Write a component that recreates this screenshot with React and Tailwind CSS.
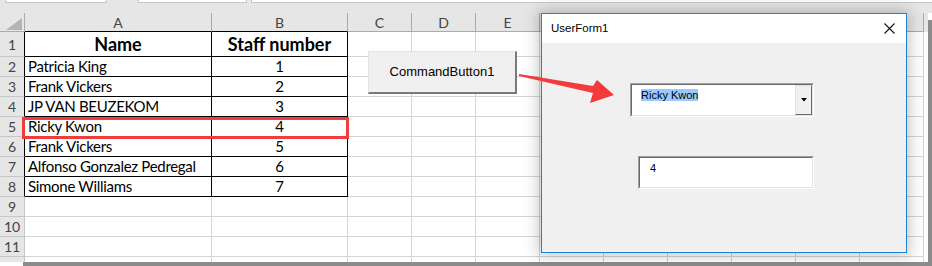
import React from "react";

const COLS = [187, 136, 64, 64, 64, 64, 64, 64, 64, 64, 64];
const LETTERS = ["A", "B", "C", "D", "E", "", "", "", "", "", ""];
const NAMES = [
  "Patricia King",
  "Frank Vickers",
  "JP VAN BEUZEKOM",
  "Ricky Kwon",
  "Frank Vickers",
  "Alfonso Gonzalez Pedregal",
  "Simone Williams",
];

function HeaderRow() {
  return (
    <div className="flex h-[19px] shrink-0 bg-[#e6e6e6] text-[14px] text-[#444]">
      <div className="relative w-[25px] shrink-0 border-r border-b border-[#ababab]">
        <svg className="absolute left-[6px] top-[5px]" width="16" height="12" viewBox="0 0 16 12">
          <polygon points="16,0 16,12 0,12" fill="#b4b4b4" />
        </svg>
      </div>
      {COLS.map((w, i) => (
        <div
          key={i}
          style={{ width: w }}
          className={
            i < 2
              ? "flex shrink-0 items-center justify-center border-r border-b border-r-[#ababab] border-b-black"
              : "flex shrink-0 items-center justify-center border-r border-b border-[#ababab]"
          }
        >
          {LETTERS[i]}
        </div>
      ))}
    </div>
  );
}

function DataRow({ n, h, name, num, header, inTable }) {
  return (
    <div className="flex shrink-0" style={{ height: h }}>
      <div
        className={
          inTable
            ? "flex w-[25px] shrink-0 items-center justify-center border-r border-b border-r-black border-b-[#c6c6c6] bg-[#e6e6e6] text-[14px] text-[#444]"
            : "flex w-[25px] shrink-0 items-center justify-center border-r border-b border-[#c6c6c6] bg-[#e6e6e6] text-[14px] text-[#444]"
        }
      >
        {n}
      </div>
      {COLS.map((w, i) => {
        let cls = "flex shrink-0 items-end pb-[1px] border-r border-b border-[#d4d4d4]";
        if (inTable && i < 2) cls = "flex shrink-0 items-end pb-[1px] border-r border-b border-black";
        let content = null;
        if (i === 0 && name) {
          content = header ? (
            <span className="w-full text-center text-[18px] font-bold leading-[22px]">{name}</span>
          ) : (
            <span className="pl-[3px] leading-[18px] tracking-[-0.3px]">{name}</span>
          );
        }
        if (i === 1 && num) {
          content = header ? (
            <span className="w-full text-center text-[18px] font-bold leading-[22px]">{num}</span>
          ) : (
            <span className="w-full text-center leading-[18px]">{num}</span>
          );
        }
        return (
          <div key={i} style={{ width: w }} className={cls}>
            {content}
          </div>
        );
      })}
    </div>
  );
}

export default function App() {
  const rows = [];
  rows.push(<DataRow key={1} n={1} h={25} name="Name" num="Staff number" header inTable />);
  NAMES.forEach((nm, i) => {
    rows.push(<DataRow key={i + 2} n={i + 2} h={20} name={nm} num={String(i + 1)} inTable />);
  });
  [9, 10, 11].forEach((n) => rows.push(<DataRow key={n} n={n} h={20} />));
  rows.push(<DataRow key={12} n="" h={20} />);

  return (
    <div
      className="relative h-[266px] w-[932px] overflow-hidden bg-white text-black"
      style={{ fontFamily: "Lato, 'Liberation Sans', sans-serif" }}
    >
      {/* top strip */}
      <div className="flex h-[13px] items-start bg-[#e6e6e6]">
        <div className="ml-[5px] h-[3px] w-[102px] border-x border-b border-[#c6c6c6] bg-white" />
        <div className="ml-[31px] h-[3px] w-[109px] border-x border-b border-[#c6c6c6] bg-white" />
        <div className="ml-[4px] h-[3px] flex-1 border-l border-b border-[#c6c6c6] bg-white" />
      </div>

      <div className="flex h-[253px]">
        <div className="flex w-[928px] flex-col overflow-hidden text-[15px]">
          <div className="flex h-[249px] flex-col overflow-hidden">
            <HeaderRow />
            {rows}
          </div>
          <div className="ml-[23px] h-[4px] bg-[#8c8c8c]" />
        </div>
        <div className="mt-[7px] w-[4px] bg-[#8c8c8c]" />
      </div>

      {/* red highlight box */}
      <div className="absolute left-[22px] top-[117px] h-[22px] w-[327px] border-[3px] border-[#ef3d3d]" />

      {/* Command button */}
      <div
        className="absolute left-[368px] top-[51px] flex h-[43px] w-[149px] items-center justify-center border-t border-l border-b-2 border-r-2 border-t-[#e3e3e3] border-l-[#e3e3e3] border-b-[#7a7a7a] border-r-[#7a7a7a] bg-[#f0f0f0] text-[13px]"
        style={{ fontFamily: "'Liberation Sans', Arial, sans-serif" }}
      >
        CommandButton1
      </div>

      {/* UserForm */}
      <div
        className="absolute left-[541px] top-[13px] flex h-[240px] w-[366px] flex-col border border-[#1883d7] bg-[#f0f0f0] shadow-[0_0_14px_3px_rgba(0,0,0,0.22)]"
        style={{ fontFamily: "'Liberation Sans', Arial, sans-serif" }}
      >
        <div className="flex h-[29px] shrink-0 items-center justify-between bg-white pl-[9px] pr-[11px] text-[11.5px]">
          <span>UserForm1</span>
          <svg width="11" height="11" viewBox="0 0 11 11">
            <path d="M0.5 0.5 L10.5 10.5 M10.5 0.5 L0.5 10.5" stroke="#111" strokeWidth="1.1" />
          </svg>
        </div>
        <div className="flex flex-col pl-[88px] pt-[40px]">
          {/* combobox */}
          <div className="flex h-[34px] w-[184px] border border-t-[#a0a0a0] border-l-[#a0a0a0] border-b-white border-r-white">
            <div className="flex flex-1 border border-t-[#696969] border-l-[#696969] border-b-[#e3e3e3] border-r-[#e3e3e3] bg-white">
              <div className="flex-1 pl-[9px] pt-[4px] text-[11px] leading-[13px]">
                <span className="bg-[#99c9ff]">Ricky Kwon</span>
              </div>
              <div className="flex w-[17px] items-center justify-center border border-t-[#e3e3e3] border-l-[#e3e3e3] border-b-[#696969] border-r-[#696969] bg-[#f0f0f0]">
                <svg width="6" height="4" viewBox="0 0 6 4">
                  <polygon points="0,0 6,0 3,3.5" fill="#000" />
                </svg>
              </div>
            </div>
          </div>
          {/* textbox */}
          <div className="ml-[8px] mt-[39px] flex h-[33px] w-[176px] border border-t-[#a0a0a0] border-l-[#a0a0a0] border-b-white border-r-white">
            <div className="flex-1 border border-t-[#696969] border-l-[#696969] border-b-[#e3e3e3] border-r-[#e3e3e3] bg-white pl-[10px] pt-[4px] text-[11px] leading-[13px]">
              4
            </div>
          </div>
        </div>
      </div>

      {/* arrow */}
      <svg className="pointer-events-none absolute left-0 top-0" width="932" height="266">
        <polygon
          points="519,74 593,86 597,80 614,95 590,103 593,93 519,76"
          fill="#f33b3b"
        />
      </svg>
    </div>
  );
}
